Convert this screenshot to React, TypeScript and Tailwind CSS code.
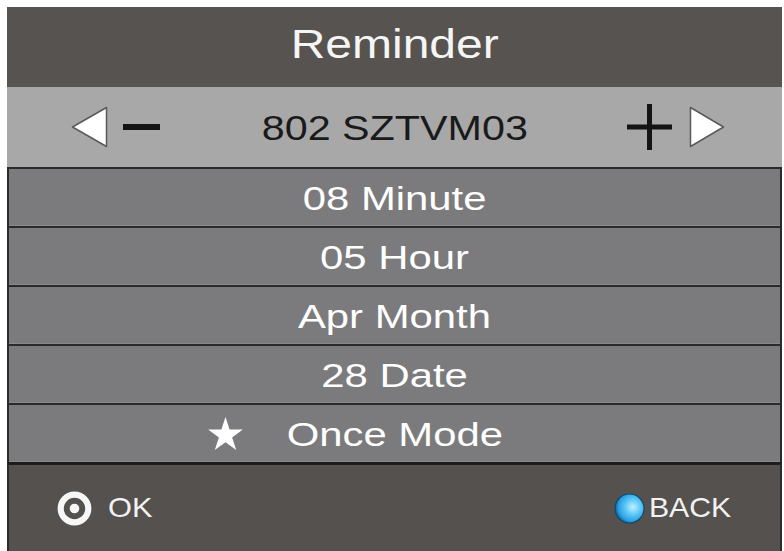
import React from "react";

const rows = ["08 Minute", "05 Hour", "Apr Month", "28 Date", "Once Mode"];

function Star() {
  return (
    <svg width="35" height="33" viewBox="0 0 100 95.1">
      <polygon
        points="50,0 61.8,36.3 100,36.3 69.1,58.8 80.9,95.1 50,72.6 19.1,95.1 30.9,58.8 0,36.3 38.2,36.3"
        fill="#ffffff"
      />
    </svg>
  );
}

export default function App() {
  return (
    <div className="w-[784px] h-[551px] bg-white pl-[7px] pt-[7px] overflow-hidden font-['Liberation_Sans',Arial,sans-serif]">
      <div className="w-[775px] h-[544px] flex flex-col">
        {/* Header */}
        <div className="h-[80px] bg-[#575350] flex items-center justify-center pb-[6px]">
          <span className="inline-block text-[40px] leading-none text-[#f5f5f5] scale-x-[1.2]">
            Reminder
          </span>
        </div>

        {/* Channel row */}
        <div className="h-[80px] bg-[#a8a8a8] grid grid-cols-[1fr_auto_1fr] items-center">
          <div className="flex items-center pl-[64px] gap-[15px]">
            <svg width="37" height="42" viewBox="0 0 37 42">
              <polygon points="35.5,1.5 35.5,40.5 1.5,21" fill="#ffffff" stroke="#5a5a5a" strokeWidth="1.5" strokeLinejoin="round" />
            </svg>
            <div className="w-[37px] h-[6px] bg-[#141414]" />
          </div>
          <span className="inline-block text-[35px] leading-none text-[#1a1a1a] scale-x-[1.18]">
            802 SZTVM03
          </span>
          <div className="flex items-center justify-end pr-[57px] gap-[17px]">
            <svg width="45" height="46" viewBox="0 0 45 46">
              <rect x="0" y="20.5" width="45" height="5" fill="#141414" />
              <rect x="20" y="0" width="5" height="46" fill="#141414" />
            </svg>
            <svg width="36" height="42" viewBox="0 0 36 42">
              <polygon points="1.5,1.5 1.5,40.5 34.5,21" fill="#ffffff" stroke="#5a5a5a" strokeWidth="1.5" strokeLinejoin="round" />
            </svg>
          </div>
        </div>

        {/* Rows */}
        {rows.map((r, i) => (
          <div
            key={r}
            className="h-[59px] bg-[#7b7b7d] border-t-2 border-x-2 border-[#2a2a2c] grid grid-cols-[1fr_auto_1fr] items-center shadow-[inset_0_-1px_0_#8a8a8c]"
          >
            <div className="flex justify-end pr-[64px]">{i === 4 ? <Star /> : null}</div>
            <span className="inline-block text-[34px] leading-none text-white scale-x-[1.23]">
              {r}
            </span>
            <div />
          </div>
        ))}

        {/* Footer */}
        <div className="flex-1 bg-[#55514e] border-t-[3px] border-x-2 border-t-[#1c1c1c] border-x-[#2c2c2e] flex items-center justify-between pl-[48px] pr-[49px]">
          <div className="flex items-center gap-[16px]">
            <svg width="35" height="35" viewBox="0 0 35 35">
              <circle cx="17.5" cy="17.5" r="13.8" fill="none" stroke="#f7f7f7" strokeWidth="6.2" />
              <circle cx="17.5" cy="17.5" r="4.8" fill="#f7f7f7" />
            </svg>
            <span className="inline-block text-[28px] leading-none text-[#f2f2f2] scale-x-[1.1] origin-left">OK</span>
          </div>
          <div className="flex items-center gap-[10px]">
            <svg width="31" height="31" viewBox="0 0 31 31">
              <defs>
                <radialGradient id="ball" cx="0.62" cy="0.45" r="0.62">
                  <stop offset="0" stopColor="#c4f0ff" />
                  <stop offset="0.4" stopColor="#62cbf8" />
                  <stop offset="0.8" stopColor="#2a9fe2" />
                  <stop offset="1" stopColor="#15608f" />
                </radialGradient>
              </defs>
              <circle cx="15.5" cy="15.5" r="14.5" fill="url(#ball)" stroke="#0f4a70" strokeWidth="1.2" />
            </svg>
            <span className="inline-block text-[28px] leading-none text-[#f2f2f2] scale-x-[1.08] origin-right">BACK</span>
          </div>
        </div>
      </div>
    </div>
  );
}
